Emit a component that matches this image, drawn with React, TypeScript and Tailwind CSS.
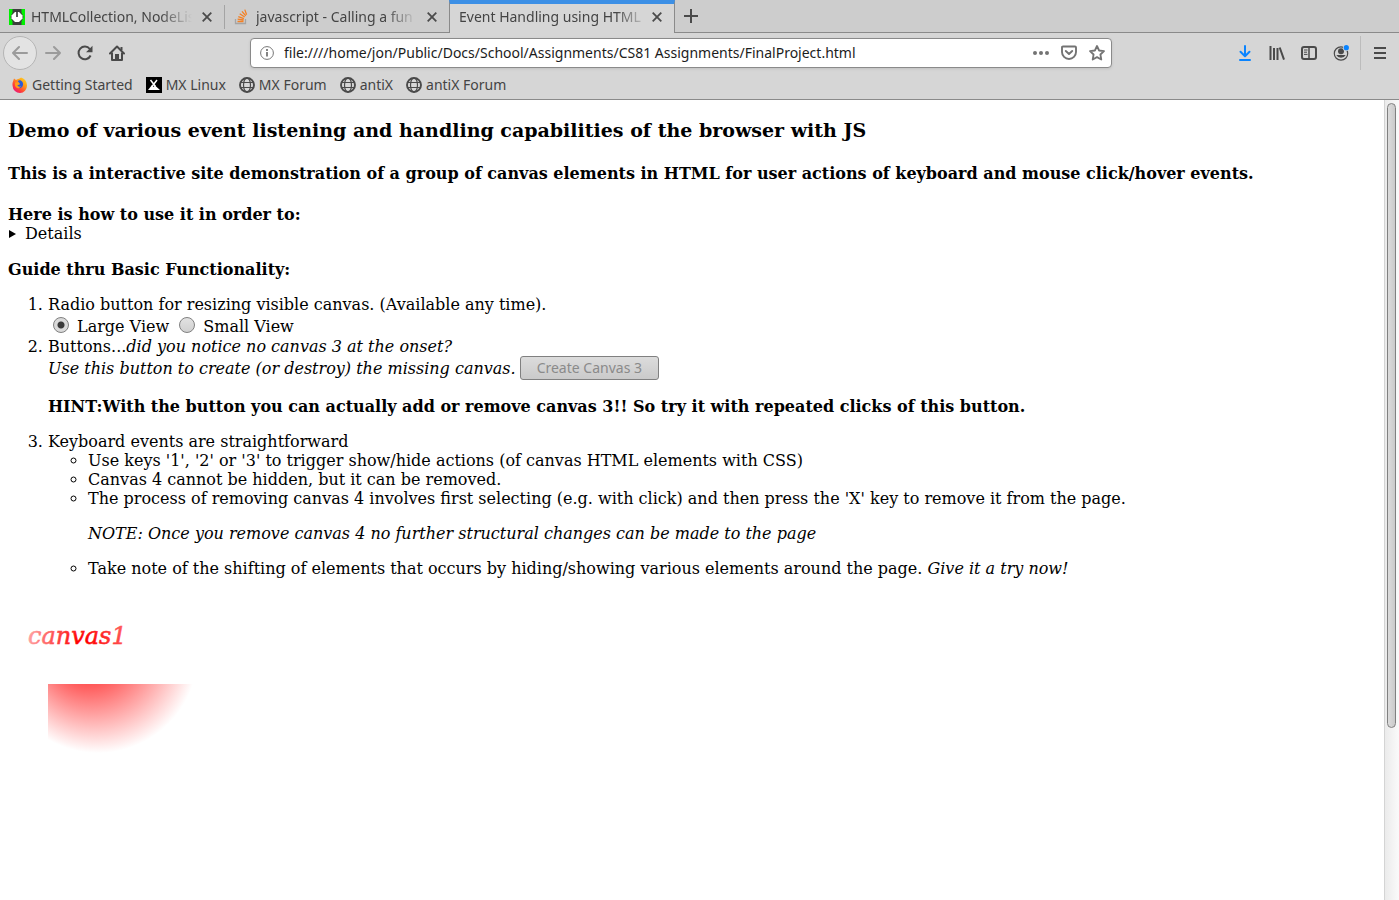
import { useState, type ReactNode } from "react";

const fade = "[mask-image:linear-gradient(to_right,black_calc(100%-32px),transparent)]";

function CloseIcon() {
  return (
    <svg width="10" height="10" viewBox="0 0 10 10" fill="none" stroke="#4b4b4b" strokeWidth="1.8">
      <path d="M0.7 0.7 9.3 9.3M9.3 0.7 0.7 9.3" />
    </svg>
  );
}

function ClockIcon() {
  return (
    <svg width="16" height="16" viewBox="0 0 16 16" className="shrink-0">
      <path fill="#00f000" d="M0 0h16v16H0z" />
      <path fill="#3c403c" d="M3.500 0h9v3.500L14.500 8l-2 4.500V16h-9v-3.500L1.500 8l2-4.500z" />
      <path fill="#fff" d="M6 3h4l3.500 3.500v3L10 13H6L2.500 9.500v-3z" />
      <path fill="#303430" d="M7.200 2.500h1.600V8H7.200z" />
    </svg>
  );
}

function StackIcon() {
  return (
    <svg width="16" height="16" viewBox="0 0 16 16" fill="none" className="shrink-0">
      <path d="M1.500 10v4.500h10V10" stroke="#a5a5a5" strokeWidth="1.300" />
      <path d="M3.500 12.500h6M3.600 10.200l6 .8M4.300 7.600l5.600 2M5.700 4.800l5 3.200M8 2.300l3.800 4.600M10.800.6l1.800 5.200" stroke="#f48024" strokeWidth="1.300" />
    </svg>
  );
}

function FirefoxIcon() {
  return (
    <svg width="16" height="16" viewBox="0 0 16 16">
      <defs>
        <linearGradient id="fox" x1="1" y1="0" x2="0.2" y2="1">
          <stop offset="0" stopColor="#ffe226" />
          <stop offset="0.4" stopColor="#ff9a1a" />
          <stop offset="0.75" stopColor="#ff3a3a" />
          <stop offset="1" stopColor="#e31587" />
        </linearGradient>
      </defs>
      <path fill="url(#fox)" d="M1 4.500 2 1.500l2 1.500C6 1.500 8 2 9 .5c3 .8 6 3.500 6 8A7.200 7.200 0 0 1 .6 9C.3 7 .5 5.500 1 4.500z" />
      <path fill="#2b5bd8" d="M6.500 3.500c3-.8 5 2 4.500 4.500-.4 2.500-2.500 3.500-4.500 3C5 10.500 4.500 9 5 8l3-.5L5.500 6z" />
      <path fill="#ff9a1a" d="M3 5.500 6.500 5 8 7 5.500 8.300c.5 1.700 2 1.700 3.500 1-1 2.500-5 2.700-6-.8z" />
    </svg>
  );
}

function MxIcon() {
  return (
    <svg width="16" height="16" viewBox="0 0 16 16">
      <path d="M0 0h16v16H0z" />
      <path d="M4.500 3 9.500 9.500M11 3 6 9.500" stroke="#fff" strokeWidth="1.500" />
      <path fill="#fff" d="m2 13 4-5 1.500 2L9 8.500l5 4.500z" />
    </svg>
  );
}

function GlobeIcon() {
  return (
    <svg width="16" height="16" viewBox="0 0 16 16" fill="none" stroke="#4a4a4a">
      <circle cx="8" cy="8" r="7" strokeWidth="1.900" />
      <ellipse cx="8" cy="8" rx="3.500" ry="7" strokeWidth="1.200" />
      <path d="M1.500 5.500h13M1.500 10.500h13" strokeWidth="1.200" />
    </svg>
  );
}

function Arrow({ flip = false }: { flip?: boolean }) {
  return (
    <svg width="16" height="16" viewBox="0 0 16 16" fill="none" stroke="#9b9b9b" strokeWidth="2" strokeLinecap="round" strokeLinejoin="round">
      {flip ? <path d="M1 8h14M9 2l6 6-6 6" /> : <path d="M15 8H1M7 2 1 8l6 6" />}
    </svg>
  );
}

function IconButton({ label, children }: { label: string; children: ReactNode }) {
  return (
    <button aria-label={label} className="flex size-8 shrink-0 items-center justify-center">
      {children}
    </button>
  );
}

function Tab({ icon, title, active = false }: { icon?: ReactNode; title: string; active?: boolean }) {
  return (
    <div
      className={
        active
          ? "-ml-px flex h-[33px] w-[226px] items-center border-x border-t-4 border-x-[#8a8a8a] border-t-[#3c8fe5] bg-[#d6d6d6] pr-3 pb-[3px] pl-[9px]"
          : "flex h-[33px] w-[225px] items-center gap-[6px] pr-[13px] pl-[9px]"
      }
    >
      {icon}
      <button className={`min-w-0 flex-1 overflow-hidden text-left whitespace-nowrap ${fade}`}>{title}</button>
      <button aria-label={`Close ${title}`} className="flex shrink-0 pl-1">
        <CloseIcon />
      </button>
    </div>
  );
}

function TabBar() {
  return (
    <div className="flex h-[33px] bg-[#cdcdcd] shadow-[inset_0_-1px_0_#8a8a8a]">
      <Tab icon={<ClockIcon />} title="HTMLCollection, NodeLis" />
      <div className="-ml-px h-6 w-px self-center bg-[#a4a4a4]" />
      <Tab icon={<StackIcon />} title="javascript - Calling a fun" />
      <Tab title="Event Handling using HTML" active />
      <IconButton label="New tab">
        <svg width="14" height="14" viewBox="0 0 14 14" stroke="#4a4a4a" strokeWidth="2">
          <path d="M7 0v14M0 7h14" />
        </svg>
      </IconButton>
    </div>
  );
}

function AddressBar() {
  return (
    <div className="flex h-[30px] w-[862px] min-w-0 items-center rounded-[4px] border border-[#8a8a8a] bg-white pl-[9px] text-[#1c1c1c] shadow-[0_1px_3px_rgba(0,0,0,0.1)]">
      <svg width="14" height="14" viewBox="0 0 14 14" fill="none" stroke="#777" className="mr-[10px] shrink-0">
        <circle cx="7" cy="7" r="6.400" />
        <path d="M7 6v4.500M7 3v2" strokeWidth="1.800" />
      </svg>
      <input
        aria-label="Address"
        className="min-w-0 flex-1 bg-transparent outline-none"
        defaultValue="file:////home/jon/Public/Docs/School/Assignments/CS81 Assignments/FinalProject.html"
      />
      <div className="flex shrink-0 items-center gap-3 pr-[6px]">
        <button aria-label="Page actions">
          <svg width="16" height="16" viewBox="0 0 16 16" fill="#737373">
            <circle cx="2" cy="8" r="2" />
            <circle cx="8" cy="8" r="2" />
            <circle cx="14" cy="8" r="2" />
          </svg>
        </button>
        <button aria-label="Save to Pocket">
          <svg width="16" height="16" viewBox="0 0 16 16" fill="none" stroke="#737373" strokeWidth="1.900" strokeLinejoin="round">
            <path d="M1 2.500q0-1 1-1h12q1 0 1 1V7A7 7 0 0 1 1 7z" />
            <path d="m4.800 6 3.200 3 3.200-3" strokeLinecap="round" />
          </svg>
        </button>
        <button aria-label="Bookmark this page">
          <svg width="16" height="16" viewBox="0 0 16 16" fill="none" stroke="#737373" strokeWidth="1.800" strokeLinejoin="round">
            <path d="m8 1 2.100 4.500 4.900.6-3.600 3.400.9 5L8 12.100l-4.300 2.400.9-5L1 6.100l4.900-.6z" />
          </svg>
        </button>
      </div>
    </div>
  );
}

function NavBar() {
  return (
    <div className="flex h-10 items-center px-[3px]">
      <button aria-label="Back" className="flex size-[34px] shrink-0 items-center justify-center rounded-full border border-[#b5b5b5] bg-[#e3e3e3]">
        <Arrow />
      </button>
      <IconButton label="Forward">
        <Arrow flip />
      </IconButton>
      <IconButton label="Reload">
        <svg width="16" height="16" viewBox="0 0 16 16" fill="none" stroke="#4a4a4a" strokeWidth="2">
          <path d="M13.600 10.500A6.300 6.300 0 1 1 12.800 4" />
          <path d="M15.500.8v6.400H9z" fill="#4a4a4a" stroke="none" />
        </svg>
      </IconButton>
      <IconButton label="Home">
        <svg width="16" height="16" viewBox="0 0 16 16" fill="none" stroke="#4a4a4a" strokeWidth="2" strokeLinejoin="round">
          <path d="M1 8.500 8 1.500l7 7" strokeLinecap="round" />
          <path d="M3 7.500V15h10V7.500" />
          <path d="M6 15V9h4v6z" fill="#4a4a4a" stroke="none" />
          <path d="M12.500 2v3" />
        </svg>
      </IconButton>
      <div className="flex min-w-0 flex-1 justify-center px-2">
        <AddressBar />
      </div>
      <IconButton label="Downloads">
        <svg width="16" height="16" viewBox="0 0 16 16" fill="none" stroke="#0a84ff" strokeWidth="2" strokeLinecap="round" strokeLinejoin="round">
          <path d="M8 1v10M3.500 6.800 8 11.200l4.500-4.400M3 15h10" />
        </svg>
      </IconButton>
      <IconButton label="Library">
        <svg width="16" height="16" viewBox="0 0 16 16" fill="none" stroke="#4a4a4a" strokeWidth="2">
          <path d="M1.500 1v14M5 3v12M8.500 3v12M10.700 2.500 15 14.600" />
        </svg>
      </IconButton>
      <IconButton label="Sidebars">
        <svg width="16" height="16" viewBox="0 0 16 16" fill="none" stroke="#4a4a4a">
          <rect x="1" y="2" width="14" height="12" rx="2" strokeWidth="2" />
          <path d="M8 2v12" strokeWidth="1.500" />
          <path d="M3 5h3.500M3 7.200h3M3 9.400h3.500" />
        </svg>
      </IconButton>
      <IconButton label="Account">
        <svg width="16" height="16" viewBox="0 0 16 16" fill="none">
          <circle cx="8" cy="8.500" r="6.700" stroke="#4a4a4a" strokeWidth="1.200" />
          <circle cx="8" cy="6.300" r="3" fill="#4a4a4a" />
          <path d="M3.300 10h9.400A5.300 5.300 0 0 1 3.300 10z" fill="#4a4a4a" />
          <circle cx="13.300" cy="2.700" r="3.400" fill="#d6d6d6" />
          <circle cx="13.300" cy="2.700" r="2.600" fill="#0a84ff" />
        </svg>
      </IconButton>
      <div className="mx-[3px] h-[34px] w-px shrink-0 bg-[#bcbcbc]" />
      <IconButton label="Menu">
        <svg width="12" height="12" viewBox="0 0 12 12" stroke="#4a4a4a" strokeWidth="2">
          <path d="M0 1h12M0 6h12M0 11h12" />
        </svg>
      </IconButton>
    </div>
  );
}

const bookmarks = [
  { title: "Getting Started", icon: <FirefoxIcon /> },
  { title: "MX Linux", icon: <MxIcon /> },
  { title: "MX Forum", icon: <GlobeIcon /> },
  { title: "antiX", icon: <GlobeIcon /> },
  { title: "antiX Forum", icon: <GlobeIcon /> },
];

function BookmarksBar() {
  return (
    <nav className="flex h-[27px] items-center gap-[13px] border-b border-[#8a8a8a] pb-[2px] pl-3">
      {bookmarks.map((b) => (
        <a key={b.title} href="#" className="flex items-center gap-1 whitespace-nowrap">
          {b.icon}
          {b.title}
        </a>
      ))}
    </nav>
  );
}

function CanvasOne() {
  return (
    <svg width="300" height="200" viewBox="0 0 300 200" className="mt-[14px] block">
      <defs>
        <radialGradient id="glow" gradientUnits="userSpaceOnUse" cx="90" cy="61" r="100" fx="75" fy="51" fr="5">
          <stop offset="0" stopColor="#ff0000" />
          <stop offset="1" stopColor="#ffffff" />
        </radialGradient>
      </defs>
      <text x="20" y="52" fill="url(#glow)" stroke="url(#glow)" strokeWidth="0.5" fontSize="24" fontStyle="italic">
        canvas1
      </text>
      <rect x="40" y="92" width="150" height="75" fill="url(#glow)" />
    </svg>
  );
}

const radio =
  "mr-2 ml-[5px] size-4 appearance-none rounded-full border border-[#808080] bg-linear-to-b from-[#e2e2e2] to-[#d0d0d0] align-[-1px] checked:bg-[radial-gradient(circle,#3a3a3a_0_2px,#3a3a3a_3px,#dadada_4px)]";

function Page() {
  const [view, setView] = useState("large");
  return (
    <main className="min-w-0 flex-1 overflow-hidden px-2 pt-[19px] font-['DejaVu_Serif','Liberation_Serif',serif] text-[16px] leading-[19px] text-black">
      <h3 className="text-[19px] leading-[22px] font-bold">
        Demo of various event listening and handling capabilities of the browser with JS
      </h3>
      <h4 className="mt-[23px] font-bold">
        This is a interactive site demonstration of a group of canvas elements in HTML for user actions of keyboard and mouse click/hover events.
      </h4>
      <h4 className="mt-[22px] font-bold">Here is how to use it in order to:</h4>
      <details>
        <summary className="flex list-none items-center gap-[9px]">
          <svg width="8" height="8" viewBox="0 0 8 8">
            <path d="M1 0v8l7-4z" />
          </svg>
          Details
        </summary>
      </details>
      <h4 className="mt-[17px] font-bold">Guide thru Basic Functionality:</h4>
      <ol className="mt-4 list-decimal pl-10">
        <li>
          Radio button for resizing visible canvas. (Available any time).
          <div className="h-[23px] pt-[3px]">
            <label>
              <input type="radio" name="view" checked={view === "large"} onChange={() => setView("large")} className={radio} />
              Large View
            </label>{" "}
            <label>
              <input type="radio" name="view" checked={view === "small"} onChange={() => setView("small")} className={radio} />
              Small View
            </label>
          </div>
        </li>
        <li>
          Buttons...<i>did you notice no canvas 3 at the onset?</i>
          <div className="flex items-center gap-1">
            <i>Use this button to create (or destroy) the missing canvas.</i>
            <button
              disabled
              className="h-6 rounded-[3px] border border-[#808080] bg-linear-to-b from-[#dcdcdc] to-[#cacaca] px-4 pb-px font-['Noto_Sans',sans-serif] text-[14px] text-[#8a8a8a]"
            >
              Create Canvas 3
            </button>
          </div>
          <p className="my-4 pt-px font-bold">
            HINT:With the button you can actually add or remove canvas 3!! So try it with repeated clicks of this button.
          </p>
        </li>
        <li>
          Keyboard events are straightforward
          <ul className="list-[circle] pl-10">
            <li>Use keys '1', '2' or '3' to trigger show/hide actions (of canvas HTML elements with CSS)</li>
            <li>Canvas 4 cannot be hidden, but it can be removed.</li>
            <li>
              The process of removing canvas 4 involves first selecting (e.g. with click) and then press the 'X' key to remove it from the page.
              <p className="my-4 italic">NOTE: Once you remove canvas 4 no further structural changes can be made to the page</p>
            </li>
            <li>
              Take note of the shifting of elements that occurs by hiding/showing various elements around the page. <i>Give it a try now!</i>
            </li>
          </ul>
        </li>
      </ol>
      <CanvasOne />
    </main>
  );
}

export default function App() {
  return (
    <div className="flex h-screen flex-col overflow-hidden bg-white">
      <header className="shrink-0 bg-[#d6d6d6] font-['Noto_Sans',sans-serif] text-[14px] leading-5 text-[#444]">
        <TabBar />
        <NavBar />
        <BookmarksBar />
      </header>
      <div className="flex min-h-0 flex-1">
        <Page />
        <div className="w-[15px] shrink-0 border-l border-[#d4d4d4] bg-linear-to-r from-[#ebebeb] to-[#fafafa] px-[2px] pt-[3px]">
          <div className="h-[78.4%] w-[9px] rounded-full border border-[#808080] bg-linear-to-r from-[#dcdcdc] to-[#cacaca]" />
        </div>
      </div>
    </div>
  );
}
